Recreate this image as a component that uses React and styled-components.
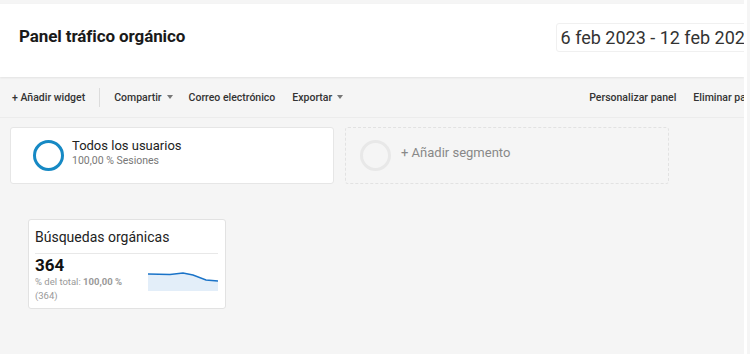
import React from "react";
import styled, { createGlobalStyle } from "styled-components";

const GlobalStyle = createGlobalStyle`
  html, body {
    margin: 0;
    padding: 0;
    background: #f5f5f5;
    font-family: Roboto, "Liberation Sans", Arial, sans-serif;
    overflow: hidden;
  }
`;

const Page = styled.div`
  width: 747px;
  height: 354px;
  padding-top: 4px;
  box-sizing: border-box;
  background: #f5f5f5;
  border-right: 3px solid #ffffff;
  overflow: hidden;
`;

const Header = styled.div`
  height: 73px;
  background: #ffffff;
  display: flex;
  align-items: center;
  justify-content: space-between;
  padding-left: 19px;
  box-shadow: 0 1px 2px rgba(0, 0, 0, 0.08);
  position: relative;
  overflow: hidden;
`;

const Title = styled.h1`
  margin: 0 0 9px;
  font-size: 17px;
  font-weight: 700;
  color: #1a1a1a;
  letter-spacing: -0.1px;
`;

const DateBox = styled.div`
  margin: 0 -16px 7px 0;
  padding: 3px 4px;
  border: 1px solid #f0f0f0;
  border-radius: 3px;
  font-size: 18px;
  color: #333;
  white-space: nowrap;
`;

const Toolbar = styled.div`
  height: 40px;
  display: flex;
  align-items: center;
  justify-content: space-between;
  padding: 0 0 0 12px;
  border-bottom: 1px solid #ececec;
  overflow: hidden;
`;

const ToolGroup = styled.div`
  display: flex;
  align-items: center;
  white-space: nowrap;
  margin-right: ${p => p.$offset || 0}px;
`;

const ToolItem = styled.span`
  font-size: 10.5px;
  font-weight: 500;
  color: #333;
  margin-right: ${p => p.$gap ?? 14}px;
  display: inline-flex;
  align-items: center;
`;

const Caret = styled.span`
  width: 0;
  height: 0;
  border-left: 3.5px solid transparent;
  border-right: 3.5px solid transparent;
  border-top: 4px solid #777;
  margin-left: 5px;
`;

const Divider = styled.span`
  width: 1px;
  height: 19px;
  background: #dcdcdc;
  margin-right: 14px;
`;

const Segments = styled.div`
  display: flex;
  gap: 11px;
  padding: 9px 0 0 10px;
`;

const SegmentCard = styled.div`
  width: 324px;
  height: 57px;
  box-sizing: border-box;
  display: flex;
  align-items: center;
  padding-left: ${p => (p.$empty ? 14 : 22)}px;
  border-radius: 3px;
  background: ${p => (p.$empty ? "transparent" : "#ffffff")};
  border: 1px ${p => (p.$empty ? "dashed #e2e2e2" : "solid #e6e6e6")};
`;

const Ring = styled.div`
  width: 25px;
  height: 25px;
  border-radius: 50%;
  border: 3px solid ${p => p.$color};
  margin-right: ${p => p.$gap}px;
  flex-shrink: 0;
`;

const SegText = styled.div`
  display: flex;
  flex-direction: column;
  margin-top: ${p => p.$shift ?? -6}px;
`;

const SegName = styled.div`
  font-size: 13px;
  color: ${p => (p.$muted ? "#888" : "#222")};
  line-height: 16px;
`;

const SegSub = styled.div`
  font-size: 10.5px;
  color: #777;
  line-height: 13px;
`;

const WidgetArea = styled.div`
  padding: 35px 0 0 28px;
`;

const Widget = styled.div`
  width: 198px;
  height: 90px;
  box-sizing: border-box;
  background: #ffffff;
  border: 1px solid #e2e2e2;
  border-radius: 3px;
  padding: 9px 7px 0 6px;
`;

const WidgetTitle = styled.div`
  font-size: 14px;
  color: #222;
  padding-bottom: 8px;
  border-bottom: 1px solid #e8e8e8;
`;

const WidgetBody = styled.div`
  display: flex;
  justify-content: space-between;
`;

const Metric = styled.div`
  display: flex;
  flex-direction: column;
`;

const Value = styled.div`
  font-size: 17px;
  font-weight: 700;
  color: #111;
  line-height: 20px;
  margin-top: 1px;
`;

const Share = styled.div`
  font-size: 9.5px;
  color: #999;
  line-height: 14px;
  width: 100px;
  b {
    font-weight: 700;
    color: #999;
  }
`;

const Spark = styled.svg`
  margin-top: 17px;
  display: block;
`;

export default function App() {
  return (
    <>
      <GlobalStyle />
      <Page>
        <Header>
          <Title>Panel tráfico orgánico</Title>
          <DateBox>6 feb 2023 - 12 feb 2023</DateBox>
        </Header>
        <Toolbar>
          <ToolGroup>
            <ToolItem>+ Añadir widget</ToolItem>
            <Divider />
            <ToolItem $gap={16}>
              Compartir
              <Caret />
            </ToolItem>
            <ToolItem $gap={17}>Correo electrónico</ToolItem>
            <ToolItem>
              Exportar
              <Caret />
            </ToolItem>
          </ToolGroup>
          <ToolGroup $offset={-16}>
            <ToolItem $gap={17}>Personalizar panel</ToolItem>
            <ToolItem $gap={0}>Eliminar panel</ToolItem>
          </ToolGroup>
        </Toolbar>
        <Segments>
          <SegmentCard>
            <Ring $color="#1689c4" $gap={8} />
            <SegText>
              <SegName>Todos los usuarios</SegName>
              <SegSub>100,00 % Sesiones</SegSub>
            </SegText>
          </SegmentCard>
          <SegmentCard $empty>
            <Ring $color="#e8e8e8" $gap={10} />
            <SegText $shift={-6}>
              <SegName $muted>+ Añadir segmento</SegName>
            </SegText>
          </SegmentCard>
        </Segments>
        <WidgetArea>
          <Widget>
            <WidgetTitle>Búsquedas orgánicas</WidgetTitle>
            <WidgetBody>
              <Metric>
                <Value>364</Value>
                <Share>
                  % del total: <b>100,00 %</b> (364)
                </Share>
              </Metric>
              <Spark width="70" height="20" viewBox="0 0 70 20">
                <path
                  d="M0 3 L22 3.5 L35 2 L45 4 L58 9 L70 10 L70 20 L0 20 Z"
                  fill="#e3eef9"
                />
                <path
                  d="M0 3 L22 3.5 L35 2 L45 4 L58 9 L70 10"
                  fill="none"
                  stroke="#1a73c8"
                  strokeWidth="1.4"
                />
              </Spark>
            </WidgetBody>
          </Widget>
        </WidgetArea>
      </Page>
    </>
  );
}
